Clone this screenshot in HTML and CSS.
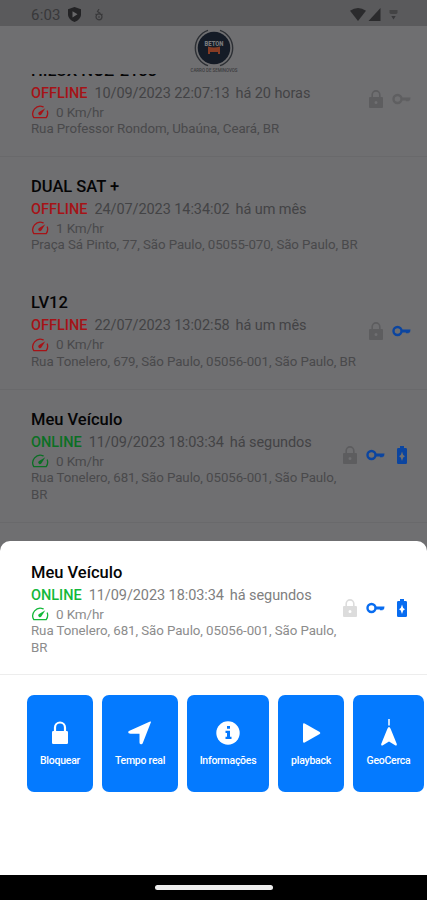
FILE: index.html
```html
<!DOCTYPE html>
<html lang="pt-BR">
<head>
<meta charset="utf-8">
<title>Veículos</title>
<link rel="stylesheet" href="styles.css">
</head>
<body>
<svg width="0" height="0" class="defs">
  <symbol id="gauge" viewBox="0 0 18 14"><path d="M12.200 1.800A7.600 7.600 0 0 0 2.800 12.700h12.400A7.600 7.600 0 0 0 16.300 6" fill="none" stroke="currentColor" stroke-width="1.300" stroke-linejoin="round" stroke-linecap="round"/><path d="M14.300 3.300 10.300 9.600A1.700 1.700 0 0 1 7.700 7.300z" fill="currentColor"/></symbol>
  <symbol id="lock" viewBox="0 0 14 18"><path d="M3.200 8V4.700a3.800 3.800 0 0 1 7.600 0V8" fill="none" stroke="currentColor" stroke-width="1.600"/><path fill-rule="evenodd" fill="currentColor" d="M1 7h12q1 0 1 1v9q0 1-1 1H1q-1 0-1-1V8q0-1 1-1zm6 4a1.500 1.500 0 1 0 0 3 1.500 1.500 0 0 0 0-3z"/></symbol>
  <symbol id="key" viewBox="0 0 19 12"><circle cx="5.500" cy="6" r="4" fill="none" stroke="currentColor" stroke-width="2.400"/><path d="M9.500 4.600H18.500L18 7.400h-1.300v.9h-2.800v-.9H9.500z" fill="currentColor"/></symbol>
  <symbol id="battery" viewBox="0 0 10 18"><path fill-rule="evenodd" fill="currentColor" d="M3 0h4v2h1.700Q10 2 10 3.300v13.400Q10 18 8.700 18H1.300Q0 18 0 16.700V3.300Q0 2 1.300 2H3zM5 5.500 3.800 9 2 10.300 3.800 11.600 5 15 6.200 11.600 8 10.300 6.200 9z"/></symbol>
</svg>
<div class="screen">
  <header class="status-bar">
    <span class="clock">6:03</span>
    <svg class="shield" viewBox="0 0 13 15"><path d="M6.500 0 13 2.200V8Q12.500 12.500 6.500 15 .5 12.500 0 8V2.200z" fill="#232325"/><path d="M4.500 4.200 9.500 7.300 4.500 10.400z" fill="#68686a"/></svg>
    <svg class="drop" viewBox="0 0 9 12" fill="none" stroke="#39393b" stroke-width="1.200"><path d="M4.500 0 3 2.500 6 4.500"/><circle cx="4.500" cy="7.800" r="3"/><path d="M3.500 8h2M1 5l1.500 1M8 5 6.500 6"/></svg>
    <span class="spacer"></span>
    <svg class="wifi" viewBox="0 0 16 13"><path d="M0 2.800Q8-2.800 16 2.800L8 13z" fill="#2b2b2d"/></svg>
    <svg class="signal" viewBox="0 0 12 13"><path d="M12 0v13H0z" fill="#2b2b2d"/></svg>
    <svg class="batt" viewBox="0 0 9 12" fill="#39393b"><path d="M.5 1h8v3L7.300 5H1.700L.5 4z" opacity=".7"/><path d="M2.300 7h4.400L4.500 10.500z"/></svg>
  </header>
  <div class="brand">
    <svg class="logo" viewBox="0 0 52 48">
      <path d="M20 4.300A18.700 18.700 0 0 0 20 39.700M32 4.300A18.700 18.700 0 0 1 32 39.700" fill="none" stroke="#2c2f34" stroke-width="1.400"/>
      <circle cx="26" cy="22" r="16.300" fill="#141b26"/>
      <text x="26" y="20" text-anchor="middle" textLength="19" lengthAdjust="spacingAndGlyphs" class="logo-name">BETON</text>
      <path d="M20 20.500q6 2 12 0v7.500h-2v-2h-8v2h-2z" fill="#873c24"/>
      <text x="26" y="46" text-anchor="middle" textLength="47" lengthAdjust="spacingAndGlyphs" class="logo-tag">CARRO DE SEMINOVOS</text>
    </svg>
  </div>
  <main class="list">
    <article class="vehicle first">
      <div class="info"><h2>HILUX NOZ-2133</h2>
        <p class="state"><b class="off">OFFLINE</b><span>10/09/2023 22:07:13</span><span>há 20 horas</span></p>
        <p class="speed"><svg class="off"><use href="#gauge"/></svg>0 Km/hr</p>
        <p class="address">Rua Professor Rondom, Ubaúna, Ceará, BR</p></div>
      <div class="icons two"><svg class="lock"><use href="#lock"/></svg><svg class="key muted"><use href="#key"/></svg></div>
    </article>
    <article class="vehicle plain">
      <div class="info"><h2>DUAL SAT +</h2>
        <p class="state"><b class="off">OFFLINE</b><span>24/07/2023 14:34:02</span><span>há um mês</span></p>
        <p class="speed"><svg class="off"><use href="#gauge"/></svg>1 Km/hr</p>
        <p class="address">Praça Sá Pinto, 77, São Paulo, 05055-070, São Paulo, BR</p></div>
    </article>
    <article class="vehicle">
      <div class="info"><h2>LV12</h2>
        <p class="state"><b class="off">OFFLINE</b><span>22/07/2023 13:02:58</span><span>há um mês</span></p>
        <p class="speed"><svg class="off"><use href="#gauge"/></svg>0 Km/hr</p>
        <p class="address">Rua Tonelero, 679, São Paulo, 05056-001, São Paulo, BR</p></div>
      <div class="icons two"><svg class="lock"><use href="#lock"/></svg><svg class="key"><use href="#key"/></svg></div>
    </article>
    <article class="vehicle">
      <div class="info"><h2>Meu Veículo</h2>
        <p class="state"><b class="on">ONLINE</b><span>11/09/2023 18:03:34</span><span>há segundos</span></p>
        <p class="speed"><svg class="on"><use href="#gauge"/></svg>0 Km/hr</p>
        <p class="address">Rua Tonelero, 681, São Paulo, 05056-001, São Paulo,<br>BR</p></div>
      <div class="icons"><svg class="lock"><use href="#lock"/></svg><svg class="key"><use href="#key"/></svg><svg class="battery"><use href="#battery"/></svg></div>
    </article>
  </main>
  <section class="sheet">
    <article class="vehicle">
      <div class="info"><h2>Meu Veículo</h2>
        <p class="state"><b class="on">ONLINE</b><span>11/09/2023 18:03:34</span><span>há segundos</span></p>
        <p class="speed"><svg class="on"><use href="#gauge"/></svg>0 Km/hr</p>
        <p class="address">Rua Tonelero, 681, São Paulo, 05056-001, São Paulo,<br>BR</p></div>
      <div class="icons"><svg class="lock"><use href="#lock"/></svg><svg class="key"><use href="#key"/></svg><svg class="battery"><use href="#battery"/></svg></div>
    </article>
    <nav class="actions">
      <button class="w66"><svg viewBox="0 0 24 24"><path d="M7 11V6.500a5 5 0 0 1 10 0V11" fill="none" stroke="#fff" stroke-width="2.200"/><rect x="4" y="10" width="16" height="13" rx="1.200" fill="#fff"/></svg><span>Bloquear</span></button>
      <button class="w76"><svg viewBox="0 0 24 24"><path d="M23 1 14.800 22q-.5 1.500-2 1.200-1.300-.2-1.300-1.700V12.700H2.500Q0 12.500.2 11.200.3 10.300 1.500 9.800L21.500.7Q23.300 0 23 1z" fill="#fff"/></svg><span>Tempo real</span></button>
      <button class="w82"><svg viewBox="0 0 24 24"><circle cx="12" cy="12" r="11.700" fill="#fff"/><path d="M11 5h3v2.800h-3zM9.500 9.800H14v6h1.500V18h-6v-2.200H11V12H9.500z" fill="#0478fe"/></svg><span>Informações</span></button>
      <button class="w66"><svg viewBox="0 0 24 24"><path d="M4 3.500Q4 1.800 5.700 2.600L20.700 11q1.300 1 0 2L5.700 21.400Q4 22.200 4 20.500z" fill="#fff"/></svg><span>playback</span></button>
      <button class="w71"><svg class="geo" viewBox="0 0 18 28"><path d="M9 0v6.500" stroke="#fff" stroke-width="1.500"/><path d="M7.300 10Q9 6 10.700 10L16.800 25q.4 2-1.300 1.500L9 22.500l-6.500 4Q.8 27 1.200 25z" fill="#fff"/></svg><span>GeoCerca</span></button>
    </nav>
  </section>
  <footer class="home"><i></i></footer>
</div>
</body>
</html>
```
FILE: styles.css
```css
* { box-sizing: border-box; }
body { margin: 0; background: #6f6f71; font-family: Roboto, "Liberation Sans", sans-serif; }
h2, p { margin: 0; }
.defs { position: absolute; }
.screen { width: 427px; height: 900px; overflow: hidden; display: flex; flex-direction: column; background: #6f6f71; }
.status-bar { flex: none; height: 26px; background: #5a5a5c; display: flex; align-items: center; padding: 3px 29px 0 31px; }
.clock { width: 37px; font-size: 15px; letter-spacing: .2px; color: #38383a; }
.shield { width: 13px; height: 15px; }
.drop { width: 10px; height: 12px; margin-left: 13px; }
.spacer { flex: 1; }
.wifi { width: 16px; height: 13px; }
.signal { width: 13px; height: 13px; margin-left: 2px; }
.batt { width: 9px; height: 12px; margin-left: 8px; }
.brand { flex: none; height: 48px; display: flex; justify-content: center; }
.logo { width: 52px; height: 48px; }
.logo-name { font-size: 6.5px; font-weight: 900; fill: #77797c; }
.logo-tag { font-size: 4.5px; font-weight: 500; fill: #3c3c3e; }
.list { height: 467px; flex: none; overflow: hidden; }
.vehicle { display: flex; padding: 18.6px 0 19px 31px; border-bottom: 1px solid #69696b; position: relative; height: 116.4px; }
.first { margin-top: -33px; }
.plain { border-color: transparent; }
.info { width: 340px; white-space: nowrap; }
h2 { font-size: 16.5px; line-height: 22px; font-weight: 500; color: #050506; }
.state { display: flex; gap: 7px; font-size: 14.5px; letter-spacing: -.08px; line-height: 23px; color: #434345; }
.state b { font-weight: 500; letter-spacing: 0; }
.state span:last-child { margin-left: -1px; }
.speed { display: flex; align-items: center; gap: 7px; height: 14.5px; font-size: 13.5px; letter-spacing: -.15px; line-height: 14.5px; color: #49494b; }
.speed svg { width: 18px; height: 14px; }
.address { margin-top: 2px; font-size: 13.3px; letter-spacing: -.07px; line-height: 16.4px; color: #49494b; }
.off { color: #a61317; }
.on { color: #0b6f24; }
.vehicle:last-child { height: 132.8px; }
.sheet .vehicle { height: 131.8px; }
.icons { position: absolute; right: 20px; top: 50%; margin-top: -11px; height: 20px; display: flex; align-items: center; color: #0b45a0; }
.icons.two { right: 16px; margin-top: -10px; }
.icons .lock { width: 14px; height: 18px; color: #5d5d5f; }
.key { width: 19px; height: 12px; margin-left: 9px; }
.key.muted { color: #5f5f61; }
.battery { width: 10px; height: 18px; margin-left: 12px; }
.sheet { flex: none; height: 334px; background: #fff; border-radius: 10px 10px 0 0; padding-top: 2px; }
.sheet .vehicle { border-color: #ededed; }
.sheet h2 { color: #050505; }
.sheet .state { color: #808080; }
.sheet .speed, .sheet .address { color: #8c8c8c; }
.sheet .on { color: #13b83a; }
.sheet .icons { color: #086cf0; margin-top: -10px; }
.sheet .icons .lock { color: #dcdcdc; }
.actions { display: flex; gap: 9px; padding: 20px 0 0 27px; }
.actions button { flex: none; height: 97px; border: 0; border-radius: 7px; padding: 26px 0 0; background: #047aff; color: #fff; font: 500 10.5px/14px Roboto, sans-serif; letter-spacing: -.25px; display: flex; flex-direction: column; align-items: center; }
.actions svg { width: 24px; height: 24px; }
.actions .geo { width: 18px; height: 28px; margin: -2px 0 -2px; }
.actions span { margin-top: 9px; }
.w66 { width: 66px; }
.w76 { width: 76px; }
.w82 { width: 82px; }
.w71 { width: 71px; }
.home { flex: none; height: 25px; background: #000; display: flex; justify-content: center; padding-top: 10px; }
.home i { width: 118px; height: 5px; border-radius: 3px; background: #ededed; }
```
